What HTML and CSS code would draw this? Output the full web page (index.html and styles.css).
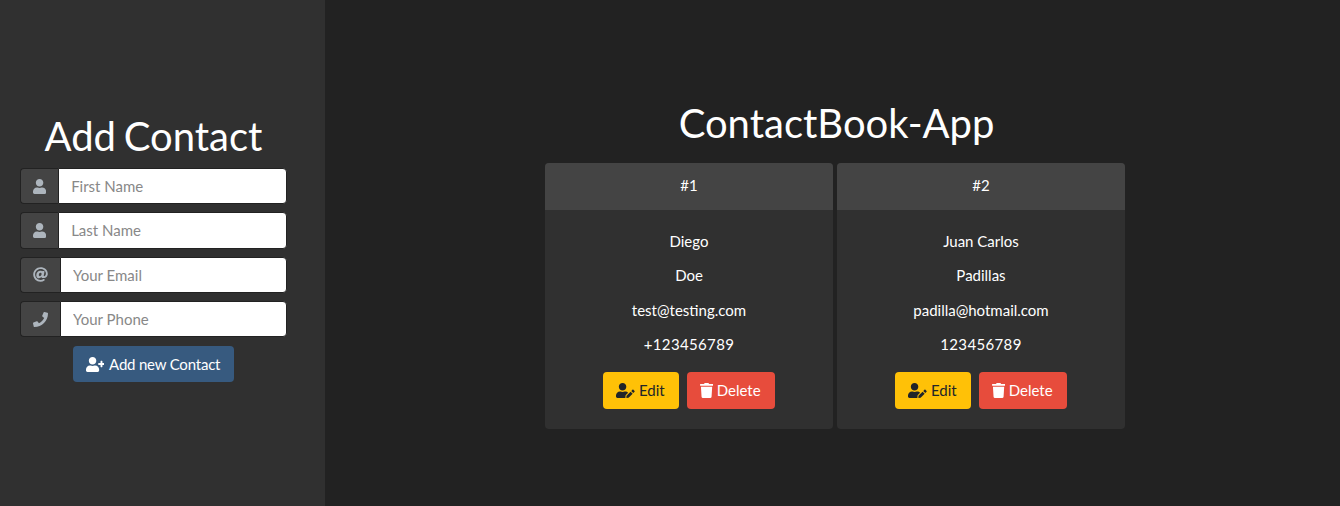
FILE: index.html
```html
<!DOCTYPE html>
<html lang="en">
<head>
    <meta charset="UTF-8">
    <title>ContactBook-App</title>
    <link rel="stylesheet" href="styles.css">
</head>
<body>
    <aside class="sidebar">
        <h1 class="title">Add Contact</h1>
        <form class="contact-form">
            <div class="input-group">
                <span class="addon">
                    <svg class="icon" viewBox="0 0 448 512"><path d="M224 256c70.7 0 128-57.3 128-128S294.7 0 224 0 96 57.3 96 128s57.3 128 128 128zm89.6 32h-16.7c-22.2 10.2-46.9 16-72.9 16s-50.6-5.8-72.9-16h-16.7C60.2 288 0 348.2 0 422.4V464c0 26.5 21.5 48 48 48h352c26.5 0 48-21.5 48-48v-41.6c0-74.2-60.2-134.4-134.4-134.4z"/></svg>
                </span>
                <input class="field" type="text" placeholder="First Name">
            </div>
            <div class="input-group">
                <span class="addon">
                    <svg class="icon" viewBox="0 0 448 512"><path d="M224 256c70.7 0 128-57.3 128-128S294.7 0 224 0 96 57.3 96 128s57.3 128 128 128zm89.6 32h-16.7c-22.2 10.2-46.9 16-72.9 16s-50.6-5.8-72.9-16h-16.7C60.2 288 0 348.2 0 422.4V464c0 26.5 21.5 48 48 48h352c26.5 0 48-21.5 48-48v-41.6c0-74.2-60.2-134.4-134.4-134.4z"/></svg>
                </span>
                <input class="field" type="text" placeholder="Last Name">
            </div>
            <div class="input-group">
                <span class="addon">
                    <svg class="icon" viewBox="0 0 512 512"><path d="M256 8C118.941 8 8 118.919 8 256c0 137.059 110.919 248 248 248 48.154 0 95.342-14.14 135.408-40.223 12.005-7.815 14.625-24.288 5.552-35.372l-10.177-12.433c-7.671-9.371-21.179-11.667-31.373-5.129C325.92 429.757 291.314 440 256 440c-101.458 0-184-82.542-184-184S154.542 72 256 72c100.139 0 184 57.619 184 160 0 38.786-21.093 79.742-58.17 83.693-17.349-.454-16.91-12.857-13.476-30.024l23.433-121.11C394.653 149.75 383.308 136 368.225 136h-44.981a13.518 13.518 0 0 0-13.432 11.993l-.01.092c-14.697-17.901-40.448-21.775-59.971-21.775-74.58 0-137.831 62.234-137.831 151.46 0 65.303 36.785 105.87 96 105.87 26.984 0 57.369-15.637 74.991-38.333 9.522 34.104 40.613 34.103 70.71 34.103C462.609 379.41 504 307.798 504 232 504 95.653 394.023 8 256 8zm-21.68 304.43c-22.249 0-36.07-15.623-36.07-40.771 0-44.993 30.779-72.729 58.63-72.729 22.292 0 35.601 15.241 35.601 40.77 0 45.061-33.875 72.73-58.161 72.73z"/></svg>
                </span>
                <input class="field" type="email" placeholder="Your Email">
            </div>
            <div class="input-group">
                <span class="addon">
                    <svg class="icon" viewBox="0 0 512 512"><path d="M493.4 24.6l-104-24c-11.3-2.6-22.9 3.3-27.5 13.9l-48 112c-4.2 9.8-1.4 21.3 6.9 28l60.6 49.6c-36 76.7-98.9 140.5-177.2 177.2l-49.6-60.6c-6.8-8.3-18.2-11.1-28-6.9l-112 48C3.9 366.5-2 378.1.6 389.4l24 104C27.1 504.2 36.7 512 48 512c256.1 0 464-207.5 464-464 0-11.2-7.7-20.9-18.6-23.4z"/></svg>
                </span>
                <input class="field" type="text" placeholder="Your Phone">
            </div>
            <button class="btn btn-primary" type="button">
                <svg class="icon" viewBox="0 0 640 512"><path d="M624 208h-64v-64c0-8.8-7.2-16-16-16h-32c-8.8 0-16 7.2-16 16v64h-64c-8.8 0-16 7.2-16 16v32c0 8.8 7.2 16 16 16h64v64c0 8.8 7.2 16 16 16h32c8.8 0 16-7.2 16-16v-64h64c8.8 0 16-7.2 16-16v-32c0-8.8-7.2-16-16-16zm-400 48c70.7 0 128-57.3 128-128S294.7 0 224 0 96 57.3 96 128s57.3 128 128 128zm89.6 32h-16.7c-22.2 10.2-46.9 16-72.9 16s-50.6-5.8-72.9-16h-16.7C60.2 288 0 348.2 0 422.4V464c0 26.5 21.5 48 48 48h352c26.5 0 48-21.5 48-48v-41.6c0-74.2-60.2-134.4-134.4-134.4z"/></svg>
                Add new Contact
            </button>
        </form>
    </aside>

    <main class="content">
        <h1 class="title">ContactBook-App</h1>
        <div class="card-list">
            <div class="card">
                <div class="card-header">#1</div>
                <div class="card-body">
                    <p>Diego</p>
                    <p>Doe</p>
                    <p>test@testing.com</p>
                    <p class="phone">+123456789</p>
                    <div class="card-actions">
                        <button class="btn btn-warning" type="button">
                            <svg class="icon" viewBox="0 0 640 512"><path d="M224 256c70.7 0 128-57.3 128-128S294.7 0 224 0 96 57.3 96 128s57.3 128 128 128zm89.6 32h-16.7c-22.2 10.2-46.9 16-72.9 16s-50.6-5.8-72.9-16h-16.7C60.2 288 0 348.2 0 422.4V464c0 26.5 21.5 48 48 48h274.9c-2.4-6.8-3.4-14-2.6-21.3l6.8-60.9 1.2-11.1 7.9-7.9 77.3-77.3c-24.5-27.7-60-45.5-99.9-45.5zm45.3 145.3l-6.8 61c-1.1 10.2 7.5 18.8 17.6 17.6l60.9-6.8 137.9-137.9-71.7-71.7-137.9 137.8zM633 268.9L595.1 231c-9.3-9.3-24.5-9.3-33.8 0l-37.8 37.8-4.1 4.1 71.8 71.7 41.8-41.8c9.3-9.4 9.3-24.5 0-33.9z"/></svg>
                            Edit
                        </button>
                        <button class="btn btn-danger" type="button">
                            <svg class="icon" viewBox="0 0 448 512"><path d="M432 32H312l-9.4-18.7A24 24 0 0 0 281.1 0H166.8a23.72 23.72 0 0 0-21.4 13.3L136 32H16A16 16 0 0 0 0 48v32a16 16 0 0 0 16 16h416a16 16 0 0 0 16-16V48a16 16 0 0 0-16-16zM53.2 467a48 48 0 0 0 47.9 45h245.8a48 48 0 0 0 47.9-45L416 128H32z"/></svg>
                            Delete
                        </button>
                    </div>
                </div>
            </div>
            <div class="card">
                <div class="card-header">#2</div>
                <div class="card-body">
                    <p>Juan Carlos</p>
                    <p>Padillas</p>
                    <p>padilla@hotmail.com</p>
                    <p class="phone">123456789</p>
                    <div class="card-actions">
                        <button class="btn btn-warning" type="button">
                            <svg class="icon" viewBox="0 0 640 512"><path d="M224 256c70.7 0 128-57.3 128-128S294.7 0 224 0 96 57.3 96 128s57.3 128 128 128zm89.6 32h-16.7c-22.2 10.2-46.9 16-72.9 16s-50.6-5.8-72.9-16h-16.7C60.2 288 0 348.2 0 422.4V464c0 26.5 21.5 48 48 48h274.9c-2.4-6.8-3.4-14-2.6-21.3l6.8-60.9 1.2-11.1 7.9-7.9 77.3-77.3c-24.5-27.7-60-45.5-99.9-45.5zm45.3 145.3l-6.8 61c-1.1 10.2 7.5 18.8 17.6 17.6l60.9-6.8 137.9-137.9-71.7-71.7-137.9 137.8zM633 268.9L595.1 231c-9.3-9.3-24.5-9.3-33.8 0l-37.8 37.8-4.1 4.1 71.8 71.7 41.8-41.8c9.3-9.4 9.3-24.5 0-33.9z"/></svg>
                            Edit
                        </button>
                        <button class="btn btn-danger" type="button">
                            <svg class="icon" viewBox="0 0 448 512"><path d="M432 32H312l-9.4-18.7A24 24 0 0 0 281.1 0H166.8a23.72 23.72 0 0 0-21.4 13.3L136 32H16A16 16 0 0 0 0 48v32a16 16 0 0 0 16 16h416a16 16 0 0 0 16-16V48a16 16 0 0 0-16-16zM53.2 467a48 48 0 0 0 47.9 45h245.8a48 48 0 0 0 47.9-45L416 128H32z"/></svg>
                            Delete
                        </button>
                    </div>
                </div>
            </div>
        </div>
    </main>
</body>
</html>
```
FILE: styles.css
```css
* {
    box-sizing: border-box;
}

html, body {
    height: 100%;
}

body {
    margin: 0;
    display: flex;
    background: #222;
    color: #fff;
    font-family: 'Lato', sans-serif;
    font-size: 15px;
    line-height: 1.5;
    overflow: hidden;
}

.title {
    margin: 0 0 8px;
    font-size: 40px;
    font-weight: 400;
    line-height: 1.2;
    text-align: center;
}

.icon {
    display: inline-block;
    height: 15px;
    fill: currentColor;
    vertical-align: -2px;
}

/* Sidebar */
.sidebar {
    flex: 0 0 325px;
    padding: 112px 38px 0 20px;
    background: #303030;
}

.sidebar .title {
    word-spacing: -2.5px;
}

.contact-form {
    display: flex;
    flex-direction: column;
    align-items: center;
    gap: 8px;
}

.input-group {
    display: flex;
    width: 100%;
}

.addon {
    display: flex;
    align-items: center;
    padding: 6px 12px;
    background: #444;
    border: 1px solid #222;
    border-right: 0;
    border-radius: 4px 0 0 4px;
    color: #adb5bd;
}

.field {
    flex: 1;
    min-width: 0;
    height: 36.33px;
    padding: 6px 12px;
    background: #fff;
    border: 1px solid #222;
    border-radius: 0 4px 4px 0;
    color: #444;
    font-family: inherit;
    font-size: 15px;
}

.field::placeholder {
    color: #888;
    opacity: 1;
}

/* Buttons */
.btn {
    padding: 6px 13px 6px 12px;
    border: 1px solid transparent;
    border-radius: 4px;
    font-family: inherit;
    font-size: 15px;
    line-height: 1.5;
    cursor: pointer;
}

.btn-primary {
    margin-top: 0.4px;
    background: #375a7f;
    color: #fff;
    letter-spacing: -0.2px;
}

.btn-primary .icon {
    margin-right: 1.5px;
}

.btn-warning {
    background: #ffc107;
    color: #212529;
}

.btn-danger {
    background: #e74c3c;
    color: #fff;
}

/* Contact cards */
.content {
    flex: 1;
    padding: 99px 0 0 0;
    display: flex;
    flex-direction: column;
    align-items: center;
}

.content .title {
    margin: 0 0 16px 8px;
}

.card-list {
    display: flex;
    gap: 4px;
    margin-left: 5px;
}

.card {
    width: 288px;
    background: #303030;
    border-radius: 4px;
    overflow: hidden;
    text-align: center;
}

.card-header {
    padding: 11px 20px 13px;
    background: #444;
}

.card-body {
    padding: 20px;
}

.card-body p {
    margin: 0 0 12px;
}

.card-body .phone {
    letter-spacing: 0.35px;
}

.card-actions {
    display: flex;
    justify-content: center;
    gap: 8px;
    margin-top: 16.4px;
}

.card-actions .btn {
    height: 37px;
    padding-top: 5px;
}
```
